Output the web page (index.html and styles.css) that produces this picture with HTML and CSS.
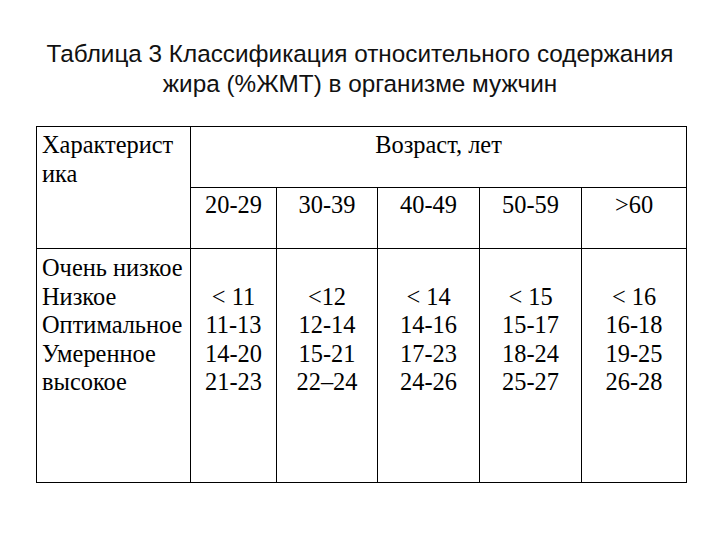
FILE: index.html
```html
<!DOCTYPE html>
<html lang="ru">
<head>
<meta charset="utf-8">
<link rel="stylesheet" href="styles.css">
</head>
<body>
<div class="page">
  <h1 class="title">Таблица 3 Классификация относительного содержания<br>жира (%ЖМТ) в организме мужчин</h1>
  <table class="grid">
    <colgroup>
      <col class="c0"><col class="c1"><col class="c2"><col class="c3"><col class="c4"><col class="c5">
    </colgroup>
    <tr class="r1">
      <td class="label" rowspan="2">Характерист<br>ика</td>
      <td class="age" colspan="5">Возраст, лет</td>
    </tr>
    <tr class="r2">
      <td class="head">20-29</td>
      <td class="head">30-39</td>
      <td class="head">40-49</td>
      <td class="head">50-59</td>
      <td class="head">&gt;60</td>
    </tr>
    <tr class="r3">
      <td class="label body">Очень низкое<br>Низкое<br>Оптимальное<br>Умеренное<br>высокое</td>
      <td class="val">&lt; 11<br>11-13<br>14-20<br>21-23</td>
      <td class="val">&lt;12<br>12-14<br>15-21<br>22–24</td>
      <td class="val">&lt; 14<br>14-16<br>17-23<br>24-26</td>
      <td class="val">&lt; 15<br>15-17<br>18-24<br>25-27</td>
      <td class="val">&lt; 16<br>16-18<br>19-25<br>26-28</td>
    </tr>
  </table>
</div>
</body>
</html>
```
FILE: styles.css
```css
html, body {
  margin: 0;
  padding: 0;
  background: #ffffff;
}
.page {
  width: 720px;
  height: 540px;
  padding-top: 39px;
  box-sizing: border-box;
}
.title {
  margin: 0;
  font-family: "Liberation Sans", Arial, sans-serif;
  font-weight: normal;
  font-size: 24.3px;
  line-height: 30px;
  text-align: center;
  color: #111;
}
.grid {
  margin: 27px 0 0 36px;
  border-collapse: collapse;
  table-layout: fixed;
  width: 650px;
  font-family: "Liberation Serif", "Times New Roman", serif;
  font-size: 24.4px;
  line-height: 28.5px;
  color: #000;
}
.grid td {
  border: 1.5px solid #000;
  padding: 0;
  vertical-align: top;
  white-space: nowrap;
}
.c0 { width: 154px; }
.c1 { width: 86px; }
.c2 { width: 101px; }
.c3 { width: 102px; }
.c4 { width: 102px; }
.c5 { width: 105px; }
.r1 { height: 61px; }
.r2 { height: 61px; }
.r3 { height: 234px; }
.grid .label {
  text-align: left;
  padding: 4px 0 0 5px;
}
.grid .body {
  padding-top: 5px;
}
.grid .age {
  text-align: center;
  padding-top: 4px;
}
.grid .head {
  text-align: center;
  padding-top: 3px;
}
.grid .val {
  text-align: center;
  padding-top: 33.5px;
}
```
